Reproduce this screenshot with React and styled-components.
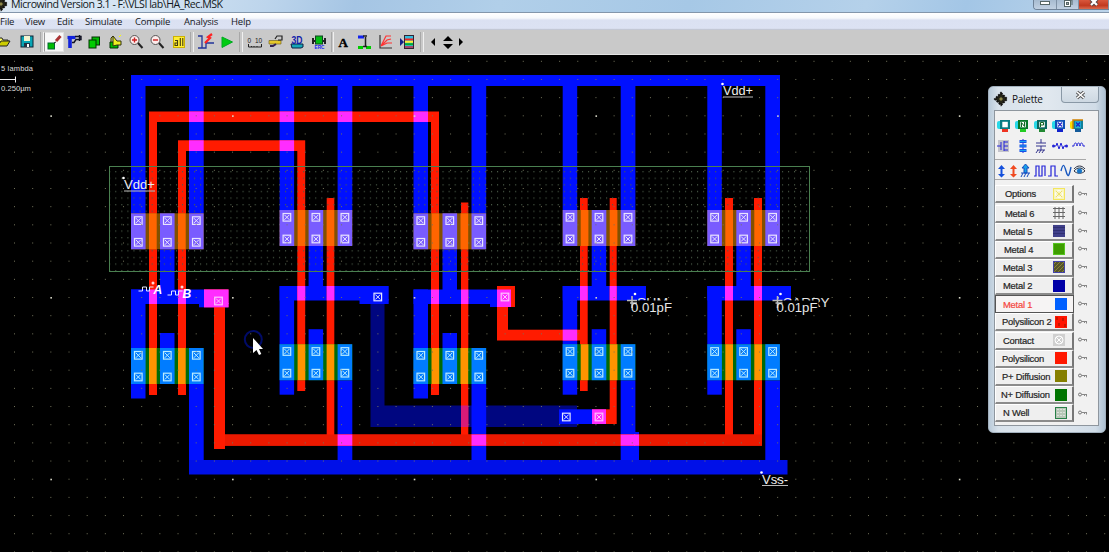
import React from "react";
import styled, { createGlobalStyle, css } from "styled-components";

const GlobalStyle = createGlobalStyle`
  * { box-sizing: border-box; }
  body { margin: 0; background: #000; overflow: hidden; }
`;

const AppWindow = styled.div`
  position: relative;
  width: 1109px;
  height: 552px;
  display: flex;
  flex-direction: column;
  overflow: hidden;
  background: #000;
  font-family: "Open Sans", "Liberation Sans", sans-serif;
`;

const TitleBar = styled.header`
  height: 13px;
  flex: none;
  display: flex;
  justify-content: space-between;
  align-items: flex-start;
  border-bottom: 1px solid #8396ab;
  background: linear-gradient(105deg, #dce8f4 0%, #d3e3f2 14%, #bdd5ec 24%, #a5c5e4 32%, #b1cfe9 45%, #a6c8e6 62%, #b5d1ea 78%, #a3c6e6 87%, #bcd4ea 100%);
`;

const TitleLeft = styled.div`
  display: flex;
  align-items: flex-start;
`;

const TitleText = styled.div`
  height: 12px;
  margin-left: 3px;
  line-height: 8px;
  font-size: 10.6px;
  letter-spacing: -0.49px;
  white-space: nowrap;
  color: #111820;
`;

const WindowButtons = styled.div`
  display: flex;
  height: 10px;
  border: 1px solid #6f8297;
  border-top: 0;
  border-right: 0;
  border-radius: 0 0 0 4px;
  overflow: hidden;
`;

const WindowButton = styled.div`
  width: ${(p) => p.$width}px;
  display: flex;
  justify-content: center;
  border-right: 1px solid #7f92a6;
  background: ${(p) => (p.$close ? "linear-gradient(#d9573c, #c23a20 60%, #d96a4e)" : "linear-gradient(#a7bbd0, #c1d1e2)")};
`;

const MenuBar = styled.nav`
  height: 17px;
  flex: none;
  display: grid;
  grid-template-columns: 25px 32px 28px 50px 49px 47px auto;
  line-height: 17px;
  font-size: 9.5px;
  letter-spacing: -0.2px;
  color: #16181c;
  background: linear-gradient(#fff 0, #f6f8fc 30%, #dbe1f2 42%, #dce2f3 90%, #b9bdc8 100%);
`;

const ToolBar = styled.div`
  height: 25px;
  flex: none;
  display: flex;
  align-items: stretch;
  background: #c9c9c9;
  border-bottom: 1px solid #e4e4e4;
  padding: 2px 0;
`;

const ToolButton = styled.div`
  width: ${(p) => p.$width}px;
  flex: none;
  display: flex;
  align-items: center;
  justify-content: center;
  margin-left: ${(p) => (p.$first ? "-6px" : 0)};
  ${(p) => p.$active && css`background: #f8f8f8; border: 1px solid #e0e0e0; border-left-color: #999;`}
`;

const ToolDivider = styled.div`
  width: ${(p) => p.$width}px;
  flex: none;
  display: flex;
  justify-content: center;
  &::after {
    content: "";
    width: 2px;
    border-left: 1px solid #a8a8a8;
    border-right: 1px solid #f0f0f0;
  }
`;

const Icon = styled.svg`
  display: block;
  flex: none;
  overflow: visible;
`;

const Workspace = styled.main`
  flex: 1;
  background: #000;
`;

const PaletteWindow = styled.aside`
  position: absolute;
  left: 988px;
  top: 86px;
  width: 118px;
  height: 347px;
  display: flex;
  flex-direction: column;
  padding: 0 6px 6px 5px;
  border: 1px solid #a2b0bd;
  border-radius: 5px;
  background: linear-gradient(90deg, #b9cad9, #d8e2eb 8%, #e1e8ef 50%, #d0dce7 92%, #aec1d2);
`;

const PaletteTitle = styled.div`
  height: 23px;
  flex: none;
  display: flex;
  align-items: center;
  font-size: 10px;
  letter-spacing: -0.25px;
  color: #111;
`;

const PaletteCaption = styled.span`
  margin-left: 4px;
  flex: 1;
`;

const PaletteClose = styled.div`
  width: 38px;
  height: 16px;
  align-self: flex-start;
  display: flex;
  align-items: center;
  justify-content: center;
  border: 1px solid #8998a6;
  border-top: 0;
  border-radius: 0 0 4px 4px;
  background: linear-gradient(#dfe7ee, #cdd8e2);
`;

const PaletteBody = styled.div`
  flex: 1;
  border: 1px solid #8e969e;
  background: #f1f1f1;
`;

const DeviceRow = styled.div`
  height: ${(p) => p.$height}px;
  width: 91px;
  display: flex;
  align-items: center;
  justify-content: space-between;
  padding: ${(p) => p.$pad || "0"};
  ${(p) => p.$ruled && css`border-bottom: 1px solid #a8a8a8;`}
`;

const LayerRow = styled.div`
  height: ${(p) => (p.$tall ? 19.5 : 18.17)}px;
  display: flex;
  align-items: flex-start;
`;

const LayerButton = styled.div`
  width: 79px;
  height: 18px;
  flex: none;
  display: flex;
  align-items: center;
  justify-content: space-between;
  padding: 0 ${(p) => (p.$inset ? 7 : 5)}px 0 ${(p) => p.$indent - 1}px;
  border: 1px solid #fff;
  border-right: 2px solid #777;
  border-bottom: 2px solid #8b8b8b;
  background: #efefef;
  color: ${(p) => (p.$selected ? "#f4463e" : "#242424")};
  font-family: "Liberation Sans", sans-serif;
  font-size: 9.4px;
  letter-spacing: -0.2px;
  white-space: nowrap;
  -webkit-text-stroke: 0.2px currentColor;
  ${(p) => p.$selected && css`border: 1px solid #555; padding-right: 6px; background: #f6f4f4;`}
`;

const KeyCell = styled.div`
  width: 18px;
  height: 17px;
  display: flex;
  align-items: center;
  justify-content: center;
`;

/* ---------- toolbar drawings ---------- */
const tools = [
  { w: 20, first: true, art: <><path d="M2 12V4h4l1 2h5v2" fill="#ff6" stroke="#222" /><path d="M2 12l3-5h9l-3 5z" fill="#cc0" stroke="#222" /></> },
  { w: 26, art: <><rect x="2" y="2" width="12" height="11" fill="#08a5b5" stroke="#123" /><rect x="5" y="2" width="6" height="5" fill="#f4f4d0" /><rect x="5" y="9" width="6" height="4" fill="#234" /><rect x="8" y="10" width="2" height="3" fill="#fff" /></> },
  { sep: 4 },
  { w: 20, active: true, art: <><rect x="2" y="9" width="6.5" height="6" fill="#0b0" stroke="#063" /><path d="M8 9l2-1" stroke="#222" /><path d="M10 7l4.5-5" stroke="#a33" strokeWidth="3" /></> },
  { w: 20, art: <><path d="M1.500 3.500h8" stroke="#12d" strokeWidth="3.200" /><path d="M4 3v11" stroke="#12d" strokeWidth="3.600" /><path d="M9 2.500h6v3h-5l-2 3H6M13.500 1v6" stroke="#112" strokeWidth="1.400" /></> },
  { w: 20, art: <><rect x="6" y="3" width="7.5" height="8" fill="#0b0" stroke="#030" /><rect x="3" y="6" width="7" height="8" fill="#0c0" stroke="#030" /></> },
  { w: 22, art: <><path d="M3 8h8v6H3z" fill="#0b0" stroke="#030" /><path d="M6 2v10l4-1h4V7h-4zM6 2L4 4v4" fill="#ee2" stroke="#331" /><path d="M12 3l2-2" stroke="#ff0" /></> },
  { w: 20, art: <><circle cx="6.5" cy="6" r="4.5" fill="#fcecec" stroke="#555" /><path d="M4 6h5M6.5 3.5v5" stroke="#c22" strokeWidth="1.4" /><path d="M10 9l4.5 5" stroke="#222" strokeWidth="2" /></> },
  { w: 22, art: <><circle cx="6.5" cy="6" r="4.5" fill="#fcecec" stroke="#555" /><path d="M4 6h5" stroke="#c22" strokeWidth="1.4" /><path d="M10 9l4.5 5" stroke="#222" strokeWidth="2" /></> },
  { w: 21, art: <><rect x="2.5" y="2.5" width="11" height="11" fill="#fe3" stroke="#cdb200" /><path d="M4 6.500h2.500v5H4V9h2M9.300 4v8M11.800 4v8" stroke="#443c10" strokeWidth="1.1" /></> },
  { sep: 6 },
  { w: 21, art: <><path d="M0 2h4v12H0M4 14h4V9h8" stroke="#239" strokeWidth="1.3" /><path d="M14 0l-4 3 2 1-5 5" stroke="#f22" strokeWidth="2.2" /></> },
  { w: 22, art: <path d="M3 3l10.5 5L3 13.5z" fill="#0c1" stroke="#0a2" /> },
  { sep: 6 },
  { w: 21, art: <><path d="M1.5 10v3h13v-3M4.5 12v1M7 12v1M10 12v1" stroke="#222" /><text x="0.500" y="8.500" fontFamily="Liberation Sans" fontSize="6.500" fill="#222">0</text><text x="8" y="8.500" fontFamily="Liberation Sans" fontSize="6.500" fill="#222">10</text></> },
  { w: 21, art: <><path d="M1 6.500h12v3.500H1z" fill="#e6c82a" stroke="#776622" strokeWidth=".7" /><path d="M7 5l2-3h5v4h-4" stroke="#222" strokeWidth="1.2" /><path d="M2 12h3l3-2" stroke="#325" strokeWidth="2" /></> },
  { w: 21, art: <><path d="M2 10h12v3l-2 1H3z" fill="#17a8b8" stroke="#124" /><text x="2.500" y="9.500" textLength="11" lengthAdjust="spacingAndGlyphs" fontFamily="Liberation Sans" fontWeight="bold" fontSize="10.500" fill="#12a">3D</text></> },
  { w: 24, art: <><path d="M2 4v6M14 4v6M2 7h12" stroke="#222" strokeWidth="2" /><rect x="4.500" y="2" width="7" height="8" fill="#0b1" stroke="#142" /><text x="3.500" y="15" textLength="10" lengthAdjust="spacingAndGlyphs" fontFamily="Liberation Sans" fontWeight="bold" fontSize="5.500" fill="#12e">ERC</text></> },
  { sep: 3 },
  { w: 18, art: <text x="3.500" y="12.500" fontFamily="Liberation Serif" fontWeight="bold" fontSize="13" fill="#000" stroke="#000" strokeWidth=".4">A</text> },
  { w: 24, art: <><path d="M2 3h6" stroke="#12e" strokeWidth="3" /><path d="M2 13.500h5M10 13.500h5" stroke="#0c0" strokeWidth="3" /><path d="M7 2h4M9.500 3v10M7 12.500h4" stroke="#222" strokeWidth="1.500" /></> },
  { w: 20, art: <><path d="M2 1v13h12" stroke="#333" strokeWidth="1.2" /><path d="M3 12L8 2h5M3 12l6-6 4-1M3 12l6-3h5" stroke="#f33" strokeWidth="1.2" /></> },
  { w: 24, art: <><path d="M0 4l4 4-4 4z" fill="#128" /><rect x="4.500" y="1.500" width="9" height="13" fill="#3bd" stroke="#323" /><path d="M5 5.500h8" stroke="#e22" strokeWidth="2" /><path d="M5 7.800h8" stroke="#fe3" strokeWidth="2" /><path d="M5 10.200h8" stroke="#0a3" strokeWidth="2" /><path d="M5 13h8" stroke="#c24" strokeWidth="1.500" /></> },
  { sep: 4 },
  { w: 18, art: <path d="M10 4v8L6 8z" fill="#000" /> },
  { w: 12, art: <path d="M3 7l5-5 5 5zM3 10h10l-5 5z" fill="#000" /> },
  { w: 13, art: <path d="M6 4v8l4-4z" fill="#000" /> },
];

/* ---------- chip layout geometry ---------- */
const box = (x1, y1, x2, y2) => ({ x: x1, y: y1, width: x2 - x1, height: y2 - y1 });

const cells = [
  { x: 131, p: 213.3, n: 348, out: 289.500 },
  { x: 279.600, p: 210, n: 344.200, out: 286 },
  { x: 413.500, p: 213.3, n: 348, out: 289.500 },
  { x: 562.700, p: 210, n: 344.200, out: 286 },
  { x: 707.300, p: 210, n: 344.200, out: 286 },
];

const metal = [
  box(131, 75, 780, 86),
  ...cells.flatMap((c) => [
    box(c.x, 85, c.x + 14.500, c.p),
    box(c.x + 58, 85, c.x + 72.700, c.p),
    box(c.x + 29, c.p + 36, c.x + 43.500, c.out + 1),
    box(c.x, c.out, c.x + 14.500, c.n + 50.500),
    box(c.x + 29, c.n - 15, c.x + 43.500, c.n),
    box(c.x + 58, c.n + 36, c.x + 72.700, 460.500),
  ]),
  box(131, 289.500, 228.500, 304), box(199, 303, 228.500, 307.300),
  box(279.600, 286, 388.700, 300.500), box(359.500, 299, 388.700, 304),
  box(413.500, 289.500, 511, 304), box(490, 303, 511, 307),
  box(562.700, 286, 646, 300.500), box(707.300, 286, 791, 300.500),
  box(559, 409.300, 606, 424), box(634, 432, 639, 460.500),
];

const poly = [
  box(149, 111.500, 439, 122), box(149, 121, 157, 395), box(431, 121, 439, 395),
  box(178, 140.300, 305.200, 151), box(178, 150, 186, 395), box(297.300, 150, 305.200, 391),
  box(326.700, 198, 334.300, 435), box(461, 202.500, 468.300, 435),
  box(580, 198, 587.700, 391), box(609.700, 198, 616.700, 424),
  box(725, 198, 733, 435), box(754, 198, 762, 435),
  box(204, 289.300, 228.500, 307.300), box(214, 307, 225, 449),
  box(225, 434.500, 762, 445.700),
  box(497, 286, 515, 307), box(497, 306, 508, 340.500), box(508, 329.700, 580, 340.500),
  box(592, 409.300, 610, 424),
];

const overlaps = metal.flatMap((a) =>
  poly.map((b) => box(Math.max(a.x, b.x), Math.max(a.y, b.y), Math.min(a.x + a.width, b.x + b.width), Math.min(a.y + a.height, b.y + b.height)))
    .filter((r) => r.width > 0.5 && r.height > 0.5)
);

const range = (from, to, step) => {
  const out = [];
  for (let v = from; v < to; v += step) out.push(v);
  return out;
};

const Boxes = ({ items, fill }) => items.map((r, i) => <rect key={i} {...r} fill={fill} />);

const Via = ({ x, y, color = "#e4e8ff" }) => (
  <g transform={`translate(${x} ${y})`} fill="none" stroke={color} shapeRendering="auto">
    <rect x="-3.800" y="-3.800" width="7.600" height="7.600" strokeWidth="1.200" />
    <path d="M-2.500-2.500l5 5M2.500-2.500l-5 5" strokeWidth="1" />
  </g>
);

const Transistor = ({ x, y, kind }) => {
  const p = kind === "p";
  return (
    <g>
      <rect x={x} y={y} width="72.700" height="36" fill={p ? "#825000" : "#006b08"} />
      {[0, 29, 58].map((dx) => <rect key={dx} x={x + dx} y={y} width="14.600" height="36" fill={p ? "#795cff" : "#007cff"} />)}
      {[18, 47].map((dx) => <rect key={dx} x={x + dx} y={y} width="7.700" height="36" fill={p ? "#ff6500" : "#ff9400"} />)}
      {[7.300, 36.300, 65.300].map((dx) => [7.300, 29].map((dy) => (
        <Via key={`${dx}-${dy}`} x={x + dx} y={y + dy} color={p ? "#e9e4ff" : "#b9ebff"} />
      )))}
    </g>
  );
};

const Pulse = ({ x, y, name }) => (
  <g>
    <path d={`M${x} ${y}h4v-4h4v4h3v-4h4`} stroke="#e8e8ff" fill="none" />
    <circle cx={x + 14.500} cy={y - 8} r="1.500" fill="#ffd8d8" />
    <text x={x + 15} y={y + 3} fontSize="12" fontWeight="bold" fontStyle="italic" fill="#fff">{name}</text>
  </g>
);

const Probe = ({ x, name, width }) => (
  <g>
    <text x={x + 6} y="307" fontSize="13" textLength={width} lengthAdjust="spacingAndGlyphs" fill="#e4e4e4">{name}</text>
    <rect x={x + 4} y="300.500" width="38" height="13" fill="#000" />
    <path d={`M${x - 4} 300.500h10M${x - 1} 303h7M${x + 1} 296v12`} stroke="#bbb" strokeWidth="1.500" />
    <circle cx={x + 4} cy="294" r="1.300" fill="#fff" />
    <text x={x} y="311.500" fontSize="13" textLength="41" lengthAdjust="spacingAndGlyphs" fill="#e8e8e8">0.01pF</text>
  </g>
);

const Supply = ({ x, y, name, width }) => (
  <g>
    <circle cx={x - 0.500} cy={y - 11} r="1.300" fill="#fff" />
    <text x={x} y={y} fontSize="13" textLength={width} lengthAdjust="spacingAndGlyphs" fill="#eee">{name}</text>
    <path d={`M${x} ${y + 2}h${width}`} stroke="#bbb" />
  </g>
);

const ChipLayout = () => (
  <Icon width="1109" height="497" viewBox="0 55 1109 497" fontFamily="Liberation Sans, sans-serif">
    <defs>
      <pattern id="wellDots" x="115.300" y="171" width="6.060" height="6.600" patternUnits="userSpaceOnUse">
        <rect width="1" height="1.300" fill="#4b5c49" />
      </pattern>
    </defs>
    <path d="M370.500 304h14v101.500H577V427H370.500z" fill="#000680" />
    <Boxes items={metal} fill="#0010ff" />
    <rect x="189" y="460" width="598.500" height="14.500" fill="#0010e8" />
    <Boxes items={poly} fill="#ff1b00" />
    <rect x="225" y="434.500" width="537" height="11.200" fill="#eb1900" />
    <Boxes items={overlaps} fill="#ff2cff" />
    <rect x="461" y="405.500" width="7.300" height="21.500" fill="#d91a78" />
    <rect x="110" y="167" width="699" height="104" fill="url(#wellDots)" />
    {cells.map((c) => (
      <g key={c.x}>
        <Transistor x={c.x} y={c.p} kind="p" />
        <Transistor x={c.x} y={c.n} kind="n" />
      </g>
    ))}
    <rect x="109.500" y="166.500" width="700" height="105" fill="none" stroke="#4a8050" />
    {range(61.300, 552, 18.170).map((y, j) => range(14.500, 1109, 18.170).map((x, i) => {
      const major = i % 10 === 2 && j % 10 === 3;
      return <rect key={`${i}-${j}`} x={x - 0.500} y={y - 0.500} width={major ? 1.600 : 1} height={major ? 1.600 : 1} fill={major ? "#d8d8c8" : "#74745c"} />;
    }))}
    <Via x={218.500} y={301} color="#ffc4ff" />
    <Via x={377.800} y={297} />
    <Via x={505} y={297} color="#ffc4ff" />
    <Via x={566.300} y={417} />
    <Via x={599} y={417} color="#ffc4ff" />
    <Pulse x={138.500} y={291} name="A" />
    <Pulse x={167.500} y={295} name="B" />
    <Probe x={631} name="SUM" width={31} />
    <Probe x={776.500} name="CARRY" width={47} />
    <Supply x={124} y={189} name="Vdd+" width={31} />
    <Supply x={723} y={95} name="Vdd+" width={30} />
    <Supply x={762} y={483.500} name="Vss-" width={26} />
    <circle cx="253.300" cy="339.500" r="8.500" fill="none" stroke="#000b68" strokeWidth="2" />
    <path d="M253 338v15l3.500-3 2.500 5 2.300-1-2.300-5h4z" fill="#fff" />
    <text x="1" y="70.500" fontSize="7.500" textLength="32" fill="#ddd">5 lambda</text>
    <path d="M0 79.500h15.500M15.500 76.500v6" stroke="#eee" />
    <text x="1" y="91" fontSize="8" textLength="30" lengthAdjust="spacingAndGlyphs" fill="#ddd">0.250µm</text>
  </Icon>
);

/* ---------- palette drawings ---------- */
const contact = (tail, tint, mark, halo = "#28d8e8") => (
  <><rect x="0" y="3" width="6" height="8" rx="2" fill={halo} /><rect x="5" y="10" width="6" height="4" fill={tail} /><rect x="3" y="2" width="10" height="9" fill={tint} /><rect x="5.300" y="3.800" width="5.500" height="5.500" fill="#fff" />{mark}</>
);
const cross = <path d="M6 4.500l4 4M10 4.500l-4 4" stroke="#22c" strokeWidth="1.200" />;

const contactRow = [
  contact("#e32", "#0a7c84", null),
  contact("#2c2", "#087828", <path d="M6.500 9V4.500l3 4V4" fill="none" stroke="#162" />),
  contact("#283", "#0a6860", <path d="M6.500 9V4.500h3v2.500h-3" fill="none" stroke="#162" />),
  contact("#12c", "#104fb8", cross),
  contact("#135a9a", "#128098", <><rect x="5" y="3.500" width="6" height="6" fill="#16b0d8" />{cross}<path d="M3 11V2h10" fill="none" stroke="#d08000" strokeWidth="1.500" /></>, "#ffe000"),
];

const blue = "#2424d8";
const deviceRow = [
  <><rect x="2" y="2" width="11" height="12" fill="#c3c3cb" /><path d="M1 8h4M5 4v8M8 3v10M8 4h4M8 8h4M8 12h4" fill="none" stroke={blue} /></>,
  <><path d="M8 1v14" stroke={blue} /><path d="M4.500 2h7v3h-7zM4.500 6.500h7v3h-7zM4.500 11h7v3h-7z" fill="#1450e8" /><path d="M5 3.500h6M5 8h6M5 12.500h6" stroke="#18a0f0" /></>,
  <path d="M8 1v4M3 5h10M3 8h10M8 8v4M4 12h8M5 12l-2 3M8 12l-2 3M11 12l-2 3" fill="none" stroke="#35358e" />,
  <><path d="M1 8h3l1-3 2 6 2-6 2 6 1-3h3" fill="none" stroke={blue} /><circle cx="1.500" cy="8" r="1.500" fill={blue} /><circle cx="14.500" cy="8" r="1.500" fill={blue} /></>,
  <path d="M2 8h2c0-4 3-4 3 0 0-4 3-4 3 0 0-4 3-4 3 0h2" fill="none" stroke={blue} />,
];

const signalRow = [
  { w: 9, art: <path d="M4.500 2L1 6h2.500v5H1l3.500 3.500L8 11H5.500V6H8z" fill="#1450dc" /> },
  { w: 9, art: <path d="M4.500 2L1 6h2.500v5H1l3.500 3.500L8 11H5.500V6H8z" fill="#f04a20" /> },
  { w: 11, art: <path d="M5.500 1L2 5h2v5h3V5h2zM1 10h9M3 10l-2 4M6 10l-2 4M9 10l-2 4" fill="#18a0e8" stroke="#164cc0" /> },
  { w: 12, art: <path d="M0 13h2V3h3v10h3V3h3v10" fill="none" stroke={blue} strokeWidth="1.200" /> },
  { w: 10, art: <path d="M0 13h3V3h4v10h3" fill="none" stroke={blue} strokeWidth="1.200" /> },
  { w: 10, art: <path d="M0 8c2-8 3-7 5 0s3 6 5-4" fill="none" stroke="#1858c0" strokeWidth="1.400" /> },
  { w: 13, art: <><path d="M1 8c3-4 8-4 11 0-3 3-8 3-11 0zM1 6c3-4 8-4 11 0" fill="#d8eaf0" stroke="#334" /><circle cx="6.500" cy="8" r="2.500" fill="#1876c8" /></> },
];

const layers = [
  { name: "Options", indent: 10, fill: "#f7f2a0", kind: "options", inset: true },
  { name: "Metal 6", indent: 10, fill: "#f4f4f4", kind: "mesh", inset: true },
  { name: "Metal 5", indent: 8, fill: "#40408a", kind: "lines", inset: true },
  { name: "Metal 4", indent: 9, fill: "#3e9d00", kind: "border", inset: true },
  { name: "Metal 3", indent: 8, fill: "#55552b", kind: "stripe", inset: true },
  { name: "Metal 2", indent: 8, fill: "#0000a8", inset: true },
  { name: "Metal 1", indent: 8, fill: "#0060ff", selected: true },
  { name: "Polysilicon 2", indent: 7, fill: "#ff1400", kind: "flecks" },
  { name: "Contact", indent: 8, fill: "#d0d0d0", kind: "contact", inset: true },
  { name: "Polysilicon", indent: 7, fill: "#ff1800" },
  { name: "P+ Diffusion", indent: 7, fill: "#857f00" },
  { name: "N+ Diffusion", indent: 6, fill: "#007400" },
  { name: "N Well", indent: 8, fill: "#b7c7b7", kind: "well" },
];

const swatchMarks = {
  options: <><rect x=".5" y=".5" width="11" height="11" fill="#f8f4be" stroke="#f3e65e" /><circle cx="6" cy="6" r="3.500" fill="none" stroke="#fff" /><path d="M3 3l6 6M9 3l-6 6" stroke="#eee06c" /></>,
  mesh: <path d="M0 1.500h12M0 5.500h12M0 9.500h12M2 0v12M6 0v12M10 0v12" stroke="#666" />,
  lines: <path d="M0 2.500h12M0 5.500h12M0 8.500h12" stroke="#303073" />,
  border: <rect x=".5" y=".5" width="11" height="11" fill="none" stroke="#55c51f" />,
  stripe: <><path d="M0 4l4-4M0 8l8-8M0 12L12 0M4 12l8-8M8 12l4-4" stroke="#8a8332" /><rect x=".5" y=".5" width="11" height="11" fill="none" stroke="#4444aa" /></>,
  flecks: <path d="M2 1v3M8 2v3M4 7v3M10 8v3" stroke="#8f1600" />,
  contact: <><circle cx="6" cy="6" r="4" fill="none" stroke="#fff" /><path d="M3 3l6 6M9 3l-6 6" stroke="#fff" /></>,
  well: <><path d="M3 2v9M6 2v9M9 2v9" stroke="#fff" strokeDasharray="1 2" /><rect x=".5" y=".5" width="11" height="11" fill="none" stroke="#288048" /></>,
};

const Chip = () => (
  <><path d="M7 1l6 6-6 6-6-6z" fill="#252518" stroke="#111" strokeWidth="2" strokeDasharray="2 1" /><path d="M5 7l2-2 2 2-2 2z" fill="#8d884a" /></>
);

const Palette = () => (
  <PaletteWindow>
    <PaletteTitle>
      <Icon width="14" height="14"><Chip /></Icon>
      <PaletteCaption>Palette</PaletteCaption>
      <PaletteClose>
        <Icon width="9" height="8"><path d="M1 1l7 6M8 1L1 7" stroke="#555" strokeWidth="3.400" /><path d="M1 1l7 6M8 1L1 7" stroke="#fff" strokeWidth="1.600" /></Icon>
      </PaletteClose>
    </PaletteTitle>
    <PaletteBody>
      <DeviceRow $height={28} $pad="2px 1px 0 2px">
        {contactRow.map((art, i) => <Icon key={i} width="15" height="16">{art}</Icon>)}
      </DeviceRow>
      <DeviceRow $height={21} $pad="0 0 6px 1px" $ruled>
        {deviceRow.map((art, i) => <Icon key={i} width="16" height="16">{art}</Icon>)}
      </DeviceRow>
      <DeviceRow $height={20} $pad="2px 0 0 2px" $ruled>
        {signalRow.map((s, i) => <Icon key={i} width={s.w} height="16">{s.art}</Icon>)}
      </DeviceRow>
      <DeviceRow $height={5} />
      {layers.map((l, i) => (
        <LayerRow key={l.name} $tall={i === 0}>
          <LayerButton $indent={l.indent} $selected={l.selected} $inset={l.inset}>
            {l.name}
            <Icon width="12" height="12"><rect width="12" height="12" fill={l.fill} />{swatchMarks[l.kind]}</Icon>
          </LayerButton>
          <KeyCell>
            <Icon width="10" height="6"><circle cx="2" cy="2.500" r="1.500" fill="none" stroke="#777" /><path d="M3.500 2.500H9M8.500 2.500v2M6.500 2.500v1.500" stroke="#888" /></Icon>
          </KeyCell>
        </LayerRow>
      ))}
    </PaletteBody>
  </PaletteWindow>
);

export default function App() {
  return (
    <AppWindow>
      <GlobalStyle />
      <TitleBar>
        <TitleLeft>
          <Icon width="8" height="12" viewBox="6 3 8 12"><Chip /></Icon>
          <TitleText>Microwind Version 3.1 - F:\VLSI lab\HA_Rec.MSK</TitleText>
        </TitleLeft>
        <WindowButtons>
          <WindowButton $width={23}><Icon width="12" height="8"><rect x="1.500" y="1.500" width="9" height="3" fill="#fff" stroke="#566" /></Icon></WindowButton>
          <WindowButton $width={22}><Icon width="12" height="8"><path d="M4 0h6v5" fill="none" stroke="#566" /><rect x="2.500" y=".5" width="6" height="6" fill="#fff" stroke="#566" /><rect x="4.500" y="2.500" width="2" height="2" fill="#aaa" stroke="#566" /></Icon></WindowButton>
          <WindowButton $width={30} $close><Icon width="12" height="8"><path d="M3 -1l6 6M9 -1L3 5" stroke="#544" strokeWidth="4" /><path d="M3 -1l6 6M9 -1L3 5" stroke="#fff" strokeWidth="2.200" /></Icon></WindowButton>
        </WindowButtons>
      </TitleBar>
      <MenuBar>
        {["File", "View", "Edit", "Simulate", "Compile", "Analysis", "Help"].map((m) => <span key={m}>{m}</span>)}
      </MenuBar>
      <ToolBar>
        {tools.map((t, i) => t.sep
          ? <ToolDivider key={i} $width={t.sep} />
          : <ToolButton key={i} $width={t.w} $first={t.first} $active={t.active}><Icon width="16" height="16" fill="none">{t.art}</Icon></ToolButton>)}
      </ToolBar>
      <Workspace><ChipLayout /></Workspace>
      <Palette />
    </AppWindow>
  );
}
